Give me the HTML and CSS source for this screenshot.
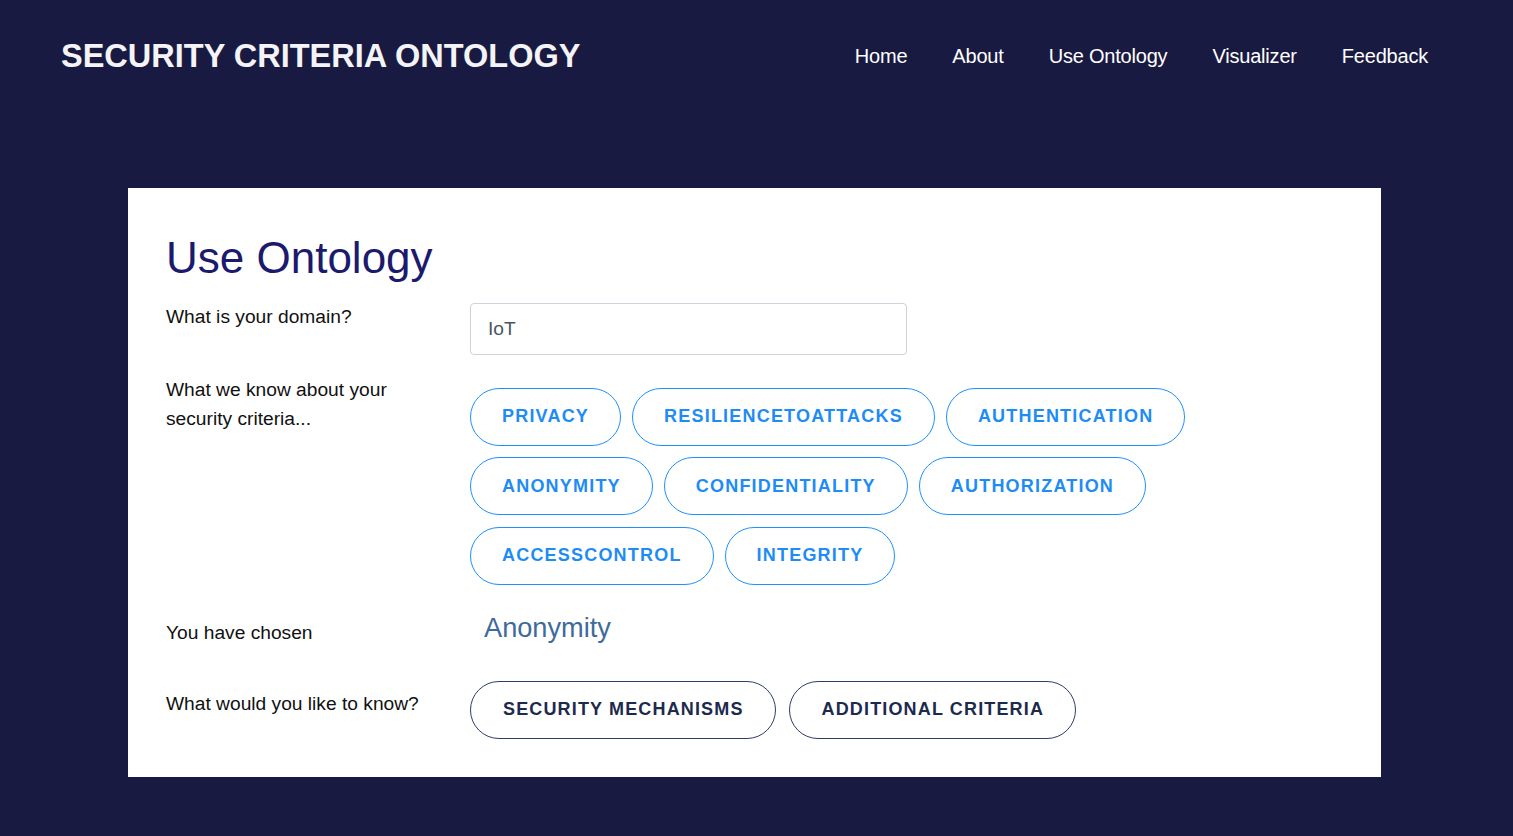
FILE: index.html
```html
<!DOCTYPE html>
<html lang="en">
<head>
<meta charset="utf-8">
<title>Security Criteria Ontology</title>
<link rel="stylesheet" href="styles.css">
</head>
<body>
<header class="topbar">
  <div class="brand">SECURITY CRITERIA ONTOLOGY</div>
  <nav class="nav">
    <a href="#">Home</a>
    <a href="#">About</a>
    <a href="#">Use Ontology</a>
    <a href="#">Visualizer</a>
    <a href="#">Feedback</a>
  </nav>
</header>
<main class="card">
  <h1 class="title">Use Ontology</h1>
  <div class="row row-domain">
    <div class="label">What is your domain?</div>
    <div class="field"><input class="input" type="text" value="IoT"></div>
  </div>
  <div class="row row-criteria">
    <div class="label">What we know about your<br>security criteria...</div>
    <div class="chips">
      <button class="chip">PRIVACY</button>
      <button class="chip">RESILIENCETOATTACKS</button>
      <button class="chip">AUTHENTICATION</button>
      <button class="chip">ANONYMITY</button>
      <button class="chip">CONFIDENTIALITY</button>
      <button class="chip">AUTHORIZATION</button>
      <button class="chip">ACCESSCONTROL</button>
      <button class="chip">INTEGRITY</button>
    </div>
  </div>
  <div class="row row-chosen">
    <div class="label label-chosen">You have chosen</div>
    <div class="chosen">Anonymity</div>
  </div>
  <div class="row row-know">
    <div class="label label-know">What would you like to know?</div>
    <div class="chips chips-know">
      <button class="chip chip-dark">SECURITY MECHANISMS</button>
      <button class="chip chip-dark">ADDITIONAL CRITERIA</button>
    </div>
  </div>
</main>
</body>
</html>
```
FILE: styles.css
```css
* { box-sizing: border-box; }
html, body {
  margin: 0;
  padding: 0;
  background: #191a41;
  font-family: "Liberation Sans", Arial, sans-serif;
  min-height: 836px;
}
.topbar {
  height: 113px;
  display: flex;
  align-items: center;
  justify-content: space-between;
  padding: 0 85px 0 61px;
}
.brand {
  color: #f4f4f8;
  font-size: 32.5px;
  font-weight: bold;
}
.nav {
  display: flex;
  gap: 45px;
}
.nav a {
  color: #ffffff;
  font-size: 20px;
  text-decoration: none;
  letter-spacing: -0.2px;
}
.card {
  background: #ffffff;
  width: 1253px;
  margin: 75px 0 0 128px;
  padding: 44px 38px 38px 38px;
  display: flex;
  flex-direction: column;
}
.title {
  margin: 0 0 18px 0;
  font-size: 44px;
  font-weight: normal;
  line-height: 1.2;
  color: #1c1a6c;
}
.row {
  display: flex;
  align-items: flex-start;
}
.label {
  width: 304px;
  flex: none;
  font-size: 19.2px;
  line-height: 28.8px;
  color: #111;
}
.field { flex: 1; }
.input {
  width: 437px;
  height: 52px;
  border: 1px solid #cdd3da;
  border-radius: 4px;
  padding: 0 17px;
  font-family: "Liberation Sans", Arial, sans-serif;
  font-size: 19.2px;
  color: #4a5563;
  outline: none;
}
.row-criteria { margin-top: 21px; }
.row-criteria .chips { margin-top: 12px; }
.chips {
  flex: 1;
  display: flex;
  flex-wrap: wrap;
  gap: 11.5px 11px;
}
.chip {
  height: 58px;
  padding: 0 31px;
  border: 1px solid #1e90ff;
  border-radius: 29px;
  background: #ffffff;
  color: #1e8cf5;
  font-family: "Liberation Sans", Arial, sans-serif;
  font-size: 18px;
  font-weight: bold;
  letter-spacing: 1.2px;
  display: inline-flex;
  align-items: center;
  cursor: pointer;
}
.chip-dark {
  border-color: #2d3d6c;
  color: #1c2a4e;
  padding: 0 31px 0 32px;
  letter-spacing: 1.15px;
}
.chips-know { gap: 13px; }
.row-chosen { margin-top: 27px; }
.label-chosen { padding-top: 7px; }
.chosen {
  padding-left: 14px;
  font-size: 27.2px;
  line-height: 1.2;
  color: #3e6a9c;
}
.row-know { margin-top: 33px; }
.label-know { padding-top: 9px; }
```
